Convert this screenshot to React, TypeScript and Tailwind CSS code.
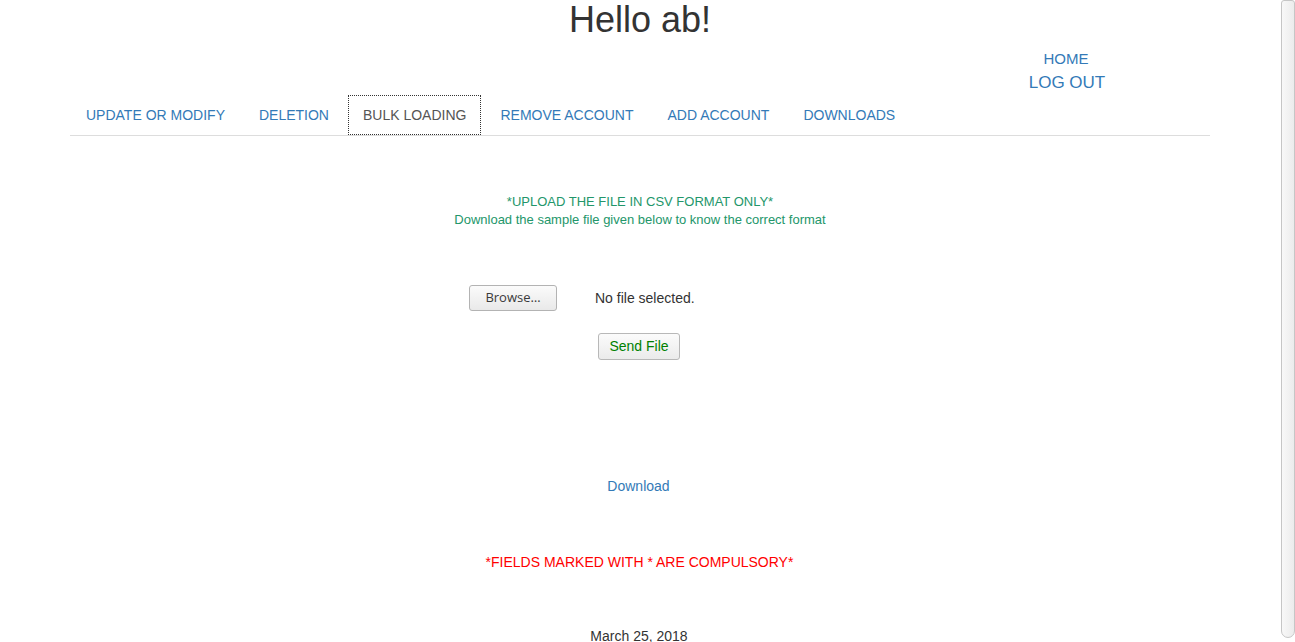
const tabs = [
  "UPDATE OR MODIFY",
  "DELETION",
  "BULK LOADING",
  "REMOVE ACCOUNT",
  "ADD ACCOUNT",
  "DOWNLOADS",
];

export default function App() {
  const active = "BULK LOADING";

  return (
    <div className="flex h-[642px] w-full overflow-hidden bg-white font-['Liberation_Sans',Arial,sans-serif] text-[#333]">
      <div className="w-[1280px] shrink-0">
        <h1 className="h-[40px] text-center text-[36px] leading-[40px]">Hello ab!</h1>

        <div className="mx-auto w-[1140px]">
          <div className="flex justify-end pt-[9px]">
            <div className="mr-[83px] flex w-[120px] flex-col items-center text-[#337ab7]">
              <a className="h-[20px] pr-[2px] text-[15px] leading-[20px]">HOME</a>
              <a className="mt-[2px] h-[24px] text-[17px] leading-[24px]">LOG OUT</a>
            </div>
          </div>

          {/* tabs */}
          <ul className="flex gap-[4px] border-b border-[#ddd] pl-[1px]">
            {tabs.map((t) => (
              <li key={t}>
                <a
                  className={
                    t === active
                      ? "block border border-dotted border-[#333] bg-white px-[14px] py-[9px] text-[14px] leading-[20px] text-[#555]"
                      : "block border border-transparent px-[14px] py-[9px] text-[14px] leading-[20px] text-[#337ab7]"
                  }
                >
                  {t}
                </a>
              </li>
            ))}
          </ul>
        </div>

        <div className="flex flex-col items-center">
          <div className="mt-[57px] text-center text-[13px] leading-[18px] text-[#23966a]">
            <p>*UPLOAD THE FILE IN CSV FORMAT ONLY*</p>
            <p>Download the sample file given below to know the correct format</p>
          </div>

          <div className="mt-[56px] flex w-[342px] items-center">
            <button className="h-[26px] w-[88px] rounded-[3px] border border-[#b3b3b3] bg-gradient-to-b from-[#fbfbfb] to-[#e9e9e9] font-['Open_Sans',sans-serif] text-[13px] text-[#3a3a3a]">
              Browse…
            </button>
            <span className="ml-[38px] text-[14px]">No file selected.</span>
          </div>

          <button className="ml-[-2px] mt-[22px] h-[27px] w-[82px] rounded-[3px] border border-[#b8b8b8] bg-gradient-to-b from-[#fbfbfb] to-[#ebebeb] text-[14px] text-[#008000]">
            Send File
          </button>

          <a className="ml-[-3px] mt-[116px] h-[20px] text-[14px] leading-[20px] text-[#337ab7]">Download</a>

          <p className="ml-[-1px] mt-[56px] h-[20px] text-[14px] leading-[20px] text-[#ff0000]">
            *FIELDS MARKED WITH * ARE COMPULSORY*
          </p>

          <p className="ml-[-2px] mt-[54px] h-[20px] text-[14px] leading-[20px]">March 25, 2018</p>
        </div>
      </div>

      {/* scrollbar */}
      <div className="h-full w-[15px] shrink-0 pl-[1px]">
        <div className="h-[638px] rounded-b-[7px] rounded-t-[3px] border border-[#c6c6c6] bg-gradient-to-r from-[#f8f8f8] to-[#ececec]" />
      </div>
    </div>
  );
}
